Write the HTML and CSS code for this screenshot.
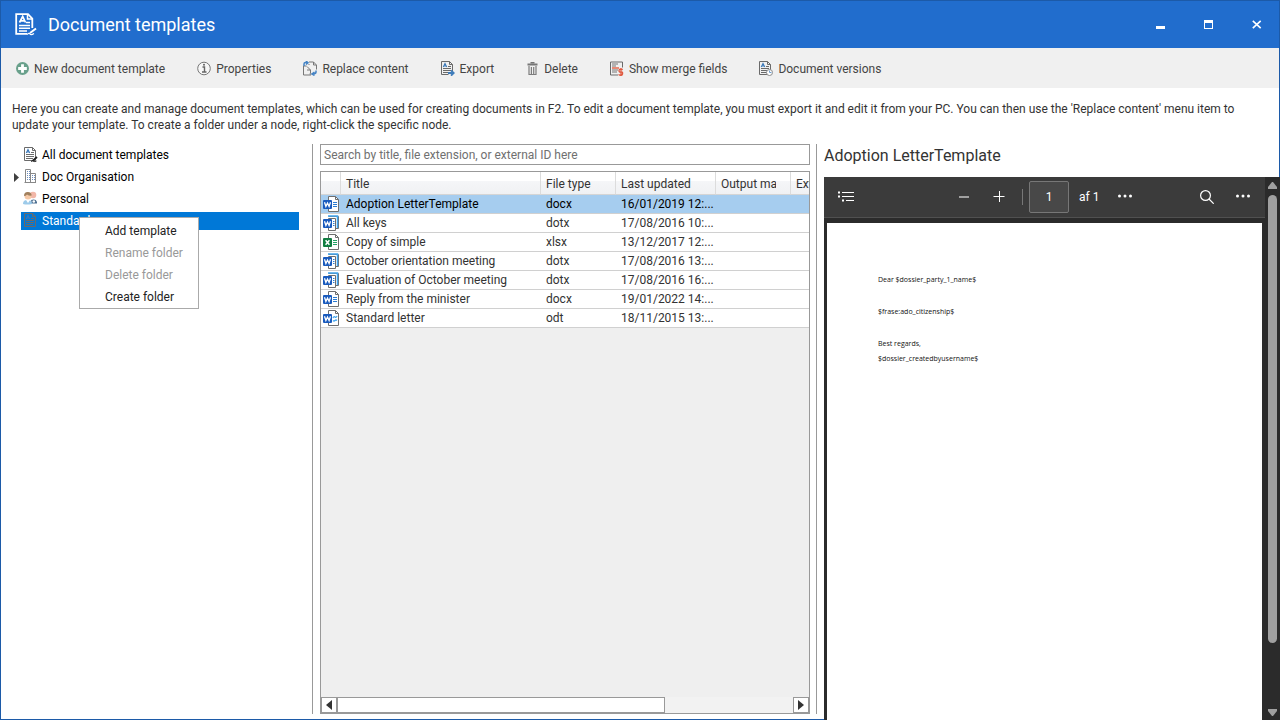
FILE: index.html
```html
<!DOCTYPE html>
<html lang="en">
<head>
<meta charset="utf-8">
<title>Document templates</title>
<link rel="stylesheet" href="styles.css">
</head>
<body>
<svg class="sprite" aria-hidden="true">
  <symbol id="i-word" viewBox="0 0 18 18">
    <path d="M6.500 1.500H13.500L16.500 4.500V16.500H6.500Z" fill="#fff" stroke="#6e6e6e"/>
    <path d="M13.500 1.500V4.500H16.500" fill="none" stroke="#6e6e6e"/>
    <path d="M11 7.500h4M11 9.500h4M11 11.500h4" stroke="#2b7cd3"/>
    <rect x="1" y="5" width="9" height="9" rx="1" fill="#185abd"/>
    <path d="M2.500 7.300L3.900 11.500L5.500 8L7.100 11.500L8.500 7.300" fill="none" stroke="#fff" stroke-width="1.300"/>
  </symbol>
  <symbol id="i-dotx" viewBox="0 0 18 18">
    <path d="M6.500 2.500H16.500V14.500H13.500V16.500H6.500V4.500" fill="#fff" stroke="#6e6e6e"/>
    <path d="M6 2H15.500V14" fill="none" stroke="#41a5ee" stroke-width="1.500"/>
    <path d="M13.500 4.500V16M6.500 4.500H13.500" fill="none" stroke="#6e6e6e"/>
    <path d="M11 7.500h1.500M11 9.500h1.500M11 11.500h1.500" stroke="#2b7cd3"/>
    <rect x="1" y="5" width="9" height="9" rx="1" fill="#185abd"/>
    <path d="M2.500 7.300L3.900 11.500L5.500 8L7.100 11.500L8.500 7.300" fill="none" stroke="#fff" stroke-width="1.300"/>
  </symbol>
  <symbol id="i-excel" viewBox="0 0 18 18">
    <path d="M6.500 1.500H13.500L16.500 4.500V16.500H6.500Z" fill="#fff" stroke="#6e6e6e"/>
    <path d="M13.500 1.500V4.500H16.500" fill="none" stroke="#6e6e6e"/>
    <path d="M11 7.500h4M11 9.500h4M11 11.500h4" stroke="#21a366"/>
    <rect x="1" y="5" width="9" height="9" rx="1" fill="#107c41"/>
    <path d="M3.600 7.200L7.400 11.800M7.400 7.200L3.600 11.800" stroke="#fff" stroke-width="1.500"/>
  </symbol>
  <symbol id="i-odt" viewBox="0 0 18 18">
    <path d="M6.500 1.500H13.500L16.500 4.500V16.500H6.500Z" fill="#fff" stroke="#6e6e6e"/>
    <path d="M13.500 1.500V4.500H16.500" fill="none" stroke="#6e6e6e"/>
    <path d="M11 9q1-2 2-1t2-1M11 11.500q1 1 2 0t2 0" fill="none" stroke="#41a5ee" stroke-width="1.300"/>
    <rect x="1" y="5" width="9" height="9" rx="1" fill="#185abd"/>
    <path d="M2.500 7.300L3.900 11.500L5.500 8L7.100 11.500L8.500 7.300" fill="none" stroke="#fff" stroke-width="1.300"/>
  </symbol>
  <symbol id="i-doc" viewBox="0 0 16 16">
    <path d="M1.500 .5H9.500L12.500 3.500V13.500H1.500Z" fill="none" stroke="#6a6a6a"/>
    <path d="M9.500 .5V3.500H12.500" fill="none" stroke="#6a6a6a"/>
    <path d="M3.300 6L5 2.500L6.700 6M4 5H6" fill="none" stroke="#3a78b8" stroke-width="1.100"/>
    <path d="M8 5.500H11M3 7.500H11M3 9.500H11M3 11.500H10" stroke="#6a6a6a"/>
  </symbol>
</svg>

<div class="window">
  <header class="titlebar">
    <svg class="app-icon" viewBox="0 0 24 24" fill="none" stroke="#fff">
      <path d="M18.300 15V5.500L14 1.200H2.200V20.800H13" stroke-width="1.800"/>
      <path d="M13.500 1V6H18.500" stroke-width="1.500"/>
      <path d="M5.500 9.500L8.700 3.500L11.500 9.500M6.500 7.800H11" stroke-width="1.700"/>
      <path d="M12 9.500H16M5 12.500H16M5 15.200H16M5 18H13" stroke-width="1.500"/>
      <path d="M22 15.500L16 20" stroke-width="2"/>
      <path d="M13 21.500q2-2 3-.5t4-.5" stroke-width="1.200"/>
    </svg>
    <h1 class="title">Document templates</h1>
    <div class="window-buttons">
      <button class="window-button" aria-label="Minimize"><svg viewBox="0 0 10 10"><path d="M0 6H9V9H0Z" fill="#fff"/></svg></button>
      <button class="window-button" aria-label="Maximize"><svg viewBox="0 0 10 10"><path d="M0 0H9V9H0ZM1 3V8H8V3Z" fill="#fff" fill-rule="evenodd"/></svg></button>
      <button class="window-button" aria-label="Close"><svg viewBox="0 0 10 10"><path d="M.8 .8L8.700 8.200M8.700 .8L.8 8.200" stroke="#fff" stroke-width="1.600"/></svg></button>
    </div>
  </header>

  <nav class="toolbar">
    <button class="tool"><svg class="tool-icon small" viewBox="0 0 12 12"><circle cx="6" cy="6" r="6" fill="#69a08b"/><path d="M6 2V10M2 6H10" stroke="#fff" stroke-width="2.600"/></svg>New document template</button>
    <button class="tool"><svg class="tool-icon" viewBox="0 0 14 14"><circle cx="7" cy="7" r="6.300" fill="#f7f7f7" stroke="#767676"/><path d="M5.500 5.500H7.500V10.500M5 10.500H9.500" fill="none" stroke="#666" stroke-width="1.400"/><circle cx="7" cy="3.300" r="1" fill="#666"/></svg>Properties</button>
    <button class="tool"><svg class="tool-icon" viewBox="0 0 14 14" fill="none"><path d="M3.500 4.500H.5V13.500H8" stroke="#777"/><path d="M6 .5H10.500L13.500 3.500V8M6 2.500V3.500M6.500 12.500H8.500M10.500 .5V3.500H13" stroke="#777"/><path d="M4 5L7.500 8.500V12M4 8.500H7.500" stroke="#777"/><path d="M1 4.500V2.500Q1 1 2.500 1H4M3 -.5L5 1.200L3 3M13 9V10.500Q13 12.500 10 12.500M11.500 10.500L9 12.500L11.500 14" stroke="#4483c4" stroke-width="1.500"/></svg>Replace content</button>
    <button class="tool"><svg class="tool-icon" viewBox="0 0 14 15"><use href="#i-doc" x="-1" width="16" height="16"/><path d="M7.500 10H13.500V15H7.500Z" fill="#f0f0f0"/><path d="M7 12H12.500M10 9.300L12.800 12L10 14.700" fill="none" stroke="#3f7dbb" stroke-width="1.800"/></svg>Export</button>
    <button class="tool"><svg class="tool-icon small" viewBox="0 0 12 13"><path d="M4 .8H8" stroke="#666" stroke-width="1.400"/><path d="M1 2.500H11" stroke="#777" stroke-width="2"/><path d="M2.500 4V12.500H9.500V4M4.900 5V12M7.200 5V12" fill="none" stroke="#7c7c7c" stroke-width="1.200"/></svg>Delete</button>
    <button class="tool"><svg class="tool-icon" viewBox="0 0 14 14"><path d="M8 13.500H.5V.5H12.500V6" fill="none" stroke="#6a6a6a"/><path d="M2 2.500H8M2 4.500H6M2 8.500H8M2 10.500H7" stroke="#777"/><path d="M2 6.500H9" stroke="#e5694e" stroke-width="1.500"/><path d="M12.800 8Q9 7 9 9T11 10.500T12.500 12.500T8.500 13M11 6.500V14.500" fill="none" stroke="#e05a40" stroke-width="1.300"/></svg>Show merge fields</button>
    <button class="tool"><svg class="tool-icon" viewBox="0 0 14 15"><use href="#i-doc" x="-1" width="16" height="16"/><circle cx="10.500" cy="11.500" r="3" fill="#fff" stroke="#8b8b8b"/><path d="M10.500 9.500V11.500H12.500" fill="none" stroke="#6f9dcc"/></svg>Document versions</button>
  </nav>

  <p class="intro">Here you can create and manage document templates, which can be used for creating documents in F2. To edit a document template, you must export it and edit it from your PC. You can then use the 'Replace content' menu item to update your template. To create a folder under a node, right-click the specific node.</p>

  <main class="panes">
    <section class="pane tree-pane" aria-label="Folders">
      <ul class="tree">
        <li class="node"><span class="twisty"></span><span class="node-label"><svg class="node-icon" viewBox="0 0 16 16"><use href="#i-doc" width="16" height="16"/><path d="M14 10L9.500 14" stroke="#222" stroke-width="1.800"/><path d="M8 14.500q1.500-1.200 2.500-.3t3-.2" fill="none" stroke="#222"/></svg>All document templates</span></li>
        <li class="node"><span class="twisty"><svg viewBox="0 0 5 9"><path d="M0 0L5 4.500L0 9Z" fill="#404040"/></svg></span><span class="node-label"><svg class="node-icon" viewBox="0 0 16 16" fill="none"><path d="M2.500 13.500V.5H7.500V13.500M7.500 4.500H12.500V13.500M1.500 13.500H13" stroke="#888"/><path d="M4.500 2V12M6.500 2V12M9.500 6V12M11.500 6V12" stroke="#6d8dbb" stroke-dasharray="1 1"/></svg>Doc Organisation</span></li>
        <li class="node"><span class="twisty"></span><span class="node-label"><svg class="node-icon" viewBox="0 0 16 16"><circle cx="10" cy="4" r="3.300" fill="#f2b7a8"/><circle cx="5" cy="5" r="3.500" fill="#f6c9a7"/><path d="M1 5Q1 .8 5 1Q8.500 1 8.700 4.500Q5 5 4 3.500Q3 5 1 5Z" fill="#a1805d"/><path d="M0 13Q0 9 4 9Q8 9 9 11V13Q4 14 0 13Z" fill="#9dcbea"/><path d="M3 9L5 12L7 9Z" fill="#fff"/><path d="M8 9Q13 7.500 14 11V12.500H9Z" fill="#4c6f91"/><circle cx="10.800" cy="10.500" r="1.300" fill="#fff"/></svg>Personal</span></li>
        <li class="node">
          <span class="twisty"></span><span class="node-label selected"><svg class="node-icon" viewBox="0 0 16 16"><use href="#i-doc" width="16" height="16"/></svg>Standard</span>
          <div class="context-menu" role="menu">
            <button class="menu-item" role="menuitem">Add template</button>
            <button class="menu-item" role="menuitem" disabled>Rename folder</button>
            <button class="menu-item" role="menuitem" disabled>Delete folder</button>
            <button class="menu-item" role="menuitem">Create folder</button>
          </div>
        </li>
      </ul>
    </section>

    <section class="pane list-pane" aria-label="Templates">
      <input class="search" type="text" aria-label="Search templates" placeholder="Search by title, file extension, or external ID here">
      <div class="list">
        <div class="list-body">
          <table class="grid">
            <colgroup><col class="c-icon"><col class="c-title"><col class="c-type"><col class="c-date"><col class="c-output"><col class="c-ext"></colgroup>
            <thead><tr><th></th><th>Title</th><th>File type</th><th>Last updated</th><th><span class="clip">Output ma</span></th><th>Ext</th></tr></thead>
            <tbody>
              <tr class="current"><td><svg class="file-icon"><use href="#i-word"/></svg></td><td>Adoption LetterTemplate</td><td>docx</td><td>16/01/2019 12:...</td><td></td><td></td></tr>
              <tr><td><svg class="file-icon"><use href="#i-dotx"/></svg></td><td>All keys</td><td>dotx</td><td>17/08/2016 10:...</td><td></td><td></td></tr>
              <tr><td><svg class="file-icon"><use href="#i-excel"/></svg></td><td>Copy of simple</td><td>xlsx</td><td>13/12/2017 12:...</td><td></td><td></td></tr>
              <tr><td><svg class="file-icon"><use href="#i-dotx"/></svg></td><td>October orientation meeting</td><td>dotx</td><td>17/08/2016 13:...</td><td></td><td></td></tr>
              <tr><td><svg class="file-icon"><use href="#i-dotx"/></svg></td><td>Evaluation of October meeting</td><td>dotx</td><td>17/08/2016 16:...</td><td></td><td></td></tr>
              <tr><td><svg class="file-icon"><use href="#i-word"/></svg></td><td>Reply from the minister</td><td>docx</td><td>19/01/2022 14:...</td><td></td><td></td></tr>
              <tr><td><svg class="file-icon"><use href="#i-odt"/></svg></td><td>Standard letter</td><td>odt</td><td>18/11/2015 13:...</td><td></td><td></td></tr>
            </tbody>
          </table>
        </div>
        <div class="hscroll">
          <button class="hscroll-button" aria-label="Scroll left"><svg viewBox="0 0 6 10"><path d="M6 0L0 5L6 10Z" fill="#333"/></svg></button>
          <div class="hscroll-track"><div class="hscroll-thumb"></div></div>
          <button class="hscroll-button" aria-label="Scroll right"><svg viewBox="0 0 6 10"><path d="M0 0L6 5L0 10Z" fill="#333"/></svg></button>
        </div>
      </div>
    </section>

    <section class="preview-pane" aria-label="Preview">
      <h2 class="preview-title">Adoption LetterTemplate</h2>
      <div class="viewer">
        <div class="viewer-main">
          <div class="viewer-bar">
            <button class="viewer-button" aria-label="Contents"><svg width="16" height="12" viewBox="0 0 16 12"><path d="M4 1.500H16M4 5.500H16M8 9.500H16" stroke="#fff"/><path d="M0 .5H2V2.500H0ZM0 4.500H2V6.500H0ZM4 8.500H6V10.500H4Z" fill="#fff"/></svg></button>
            <div class="viewer-center">
              <button class="viewer-button" aria-label="Zoom out"><svg width="12" height="12" viewBox="0 0 12 12"><path d="M1 6H11" stroke="#a0a0a0" stroke-width="2"/></svg></button>
              <button class="viewer-button" aria-label="Zoom in"><svg width="12" height="12" viewBox="0 0 12 12"><path d="M.5 5.500H11.500M6.500 0V11" stroke="#fff" stroke-width="1"/></svg></button>
              <span class="viewer-rule"></span>
              <input class="page-number" type="text" value="1" aria-label="Page number">
              <span class="page-count">af 1</span>
              <button class="viewer-button" aria-label="More options"><svg width="14" height="12" viewBox="0 0 14 12" fill="#fff"><circle cx="1.500" cy="5" r="1.500"/><circle cx="7" cy="5" r="1.500"/><circle cx="12.500" cy="5" r="1.500"/></svg></button>
            </div>
            <div class="viewer-end">
              <button class="viewer-button" aria-label="Find"><svg width="14" height="14" viewBox="0 0 14 14" fill="none" stroke="#fff" stroke-width="1.200"><circle cx="5.500" cy="5.500" r="4.900"/><path d="M9 9L13.700 13.700"/></svg></button>
              <button class="viewer-button" aria-label="More"><svg width="14" height="12" viewBox="0 0 14 12" fill="#fff"><circle cx="1.500" cy="5" r="1.500"/><circle cx="7" cy="5" r="1.500"/><circle cx="12.500" cy="5" r="1.500"/></svg></button>
            </div>
          </div>
          <article class="page">
            <p>Dear $dossier_party_1_name$</p>
            <p>$frase:ado_citizenship$</p>
            <p>Best regards,<br>$dossier_createdbyusername$</p>
          </article>
        </div>
        <div class="vscroll">
          <svg class="vscroll-arrow" viewBox="0 0 9 8"><path d="M4 0H5L9 5V7H0V5Z" fill="#a0a0a0"/></svg>
          <div class="vscroll-track"><div class="vscroll-thumb"></div></div>
          <svg class="vscroll-arrow" viewBox="0 0 9 8"><path d="M0 0H9V2L5 7H4L0 2Z" fill="#a0a0a0"/></svg>
        </div>
      </div>
    </section>
  </main>
</div>
</body>
</html>
```

FILE: styles.css
```css
* { box-sizing: border-box; }

body {
  margin: 0;
  font: 12px/16px Roboto, "Open Sans", sans-serif;
  color: #333;
  background: #fff;
}

button, input { font: inherit; color: inherit; }
button { border: 0; padding: 0; background: none; }
h1, h2, p, ul { margin: 0; padding: 0; font-weight: 400; }
svg { display: block; flex: none; }
.sprite { position: absolute; width: 0; height: 0; }

.window {
  display: flex;
  flex-direction: column;
  height: 100vh;
  border: 1px solid #1c5aa8;
}

/* Title bar */
.titlebar {
  display: flex;
  align-items: center;
  height: 47px;
  flex: none;
  padding: 0 10px 0 13px;
  background: #216dcd;
  color: #fff;
}
.app-icon { width: 24px; height: 24px; margin-right: 10px; }
.title { font-size: 18px; line-height: 24px; }
.window-buttons { display: flex; gap: 24px; margin-left: auto; }
.window-button { width: 24px; height: 24px; display: grid; place-items: center; }
.window-button svg { width: 10px; height: 10px; }

/* Toolbar */
.toolbar {
  display: flex;
  align-items: center;
  gap: 32px;
  height: 40px;
  flex: none;
  padding: 1px 15px 0;
  background: #f0f0f0;
  color: #444;
}
.tool { display: flex; align-items: center; gap: 5px; white-space: nowrap; }
.tool-icon { width: 14px; height: 15px; }
.tool-icon.small { width: 13px; height: 13px; }

.intro { padding: 13px 12px 11px 11px; min-height: 56px; flex: none; }

/* Panes */
.panes {
  display: grid;
  grid-template-columns: minmax(0, 312fr) minmax(0, 504fr) minmax(0, 462fr);
  flex: 1;
  min-height: 0;
}
.pane { margin-bottom: 5px; border-right: 1px solid #999; min-height: 0; }

.tree { display: flex; flex-direction: column; gap: 4px; padding: 2px 13px 0 12px; list-style: none; }
.node { display: flex; position: relative; color: #000; }
.twisty { width: 8px; flex: none; display: flex; align-items: center; padding-left: 1px; }
.twisty svg { width: 5px; height: 9px; }
.node-label { display: flex; align-items: center; gap: 3px; flex: 1; height: 18px; padding-left: 2px; }
.node-icon { width: 16px; height: 16px; }
.selected { background: #0078d7; color: #fff; }

.context-menu {
  position: absolute;
  left: 66px;
  top: 5px;
  width: 120px;
  padding: 2px 0 0;
  background: #fff;
  border: 1px solid #aaa;
}
.menu-item { display: block; width: 100%; height: 22px; padding-left: 25px; text-align: left; color: #222; }
.menu-item:disabled { color: #999; }

.list-pane { display: flex; flex-direction: column; gap: 6px; padding: 0 6px 0 7px; }
.search { width: 100%; height: 21px; flex: none; padding: 0 3px; border: 1px solid #999; background: #fff; }
.search::placeholder { color: #707070; opacity: 1; }

.list { display: flex; flex-direction: column; flex: 1; min-height: 0; border: 1px solid #999; background: #efefef; }
.list-body { flex: 1; overflow: hidden; }
.grid { table-layout: fixed; width: 570px; border-collapse: separate; border-spacing: 0; }
.c-icon { width: 20px; }
.c-title { width: 200px; }
.c-type { width: 75px; }
.c-date, .c-ext { width: 100px; }
.c-output { width: 75px; }
.grid th {
  height: 23px;
  padding: 1px 0 0 5px;
  font-weight: 400;
  text-align: left;
  white-space: nowrap;
  background: linear-gradient(#fff 40%, #f5f6f8 41%, #f0f1f3);
  border-right: 1px solid #dcdcdc;
  border-bottom: 1px solid #d5d5d5;
}
.clip { display: block; width: 55px; overflow: hidden; }
.grid td { height: 19px; padding: 1px 0 0 5px; line-height: 17px; background: #fff; border-bottom: 1px solid #d0d0d0; white-space: nowrap; overflow: hidden; }
.grid td:first-child { padding: 0 0 0 1px; }
.grid .current td { background: #a6cdef; color: #000; }
.file-icon { width: 18px; height: 18px; }

.hscroll { display: flex; height: 16px; flex: none; background: #f2f2f2; }
.hscroll-button { width: 16px; display: grid; place-items: center; background: #fff; border: 1px solid #999; }
.hscroll-button svg { width: 6px; height: 10px; }
.hscroll-track { flex: 1; }
.hscroll-thumb { width: 72%; height: 100%; background: #fff; border: 1px solid #999; }

/* Preview */
.preview-pane { display: flex; flex-direction: column; min-height: 0; padding-left: 7px; margin: 0 -1px -1px 0; }
.preview-title { height: 33px; flex: none; font-size: 16px; line-height: 24px; }
.viewer { display: flex; flex: 1; min-height: 0; background: #2b2b2b; }
.viewer-main { display: flex; flex-direction: column; flex: 1; }
.viewer-bar {
  display: flex;
  align-items: center;
  height: 41px;
  flex: none;
  padding: 0 15px 0 14px;
  background: #3b3b3b;
  border-bottom: 1px solid #505050;
  color: #fff;
}
.viewer-center { display: flex; align-items: center; margin: 0 auto 0 104px; }
.viewer-center .viewer-button + .viewer-button { margin-left: 23px; }
.viewer-rule { width: 1px; height: 16px; margin: 0 6px 0 17px; background: #777; }
.page-number {
  width: 40px;
  height: 32px;
  padding: 0;
  text-align: center;
  background: #484848;
  border: 1px solid #777;
  border-radius: 2px;
}
.page-count { margin: 0 19px 0 10px; }
.viewer-end { display: flex; align-items: center; gap: 22px; }
.page {
  flex: 1;
  display: flex;
  flex-direction: column;
  gap: 17px;
  margin: 5px 3px 0;
  padding: 49px 51px;
  background: #fff;
  color: #111;
  font: 7px/15px "Open Sans", sans-serif;
}
.vscroll { display: flex; flex-direction: column; align-items: center; width: 15px; padding: 5px 0 3px; }
.vscroll-arrow { width: 9px; height: 8px; }
.vscroll-track { flex: 1; width: 9px; padding: 5px 0; }
.vscroll-thumb { height: 88%; border-radius: 5px; background: #a0a0a0; }
```
